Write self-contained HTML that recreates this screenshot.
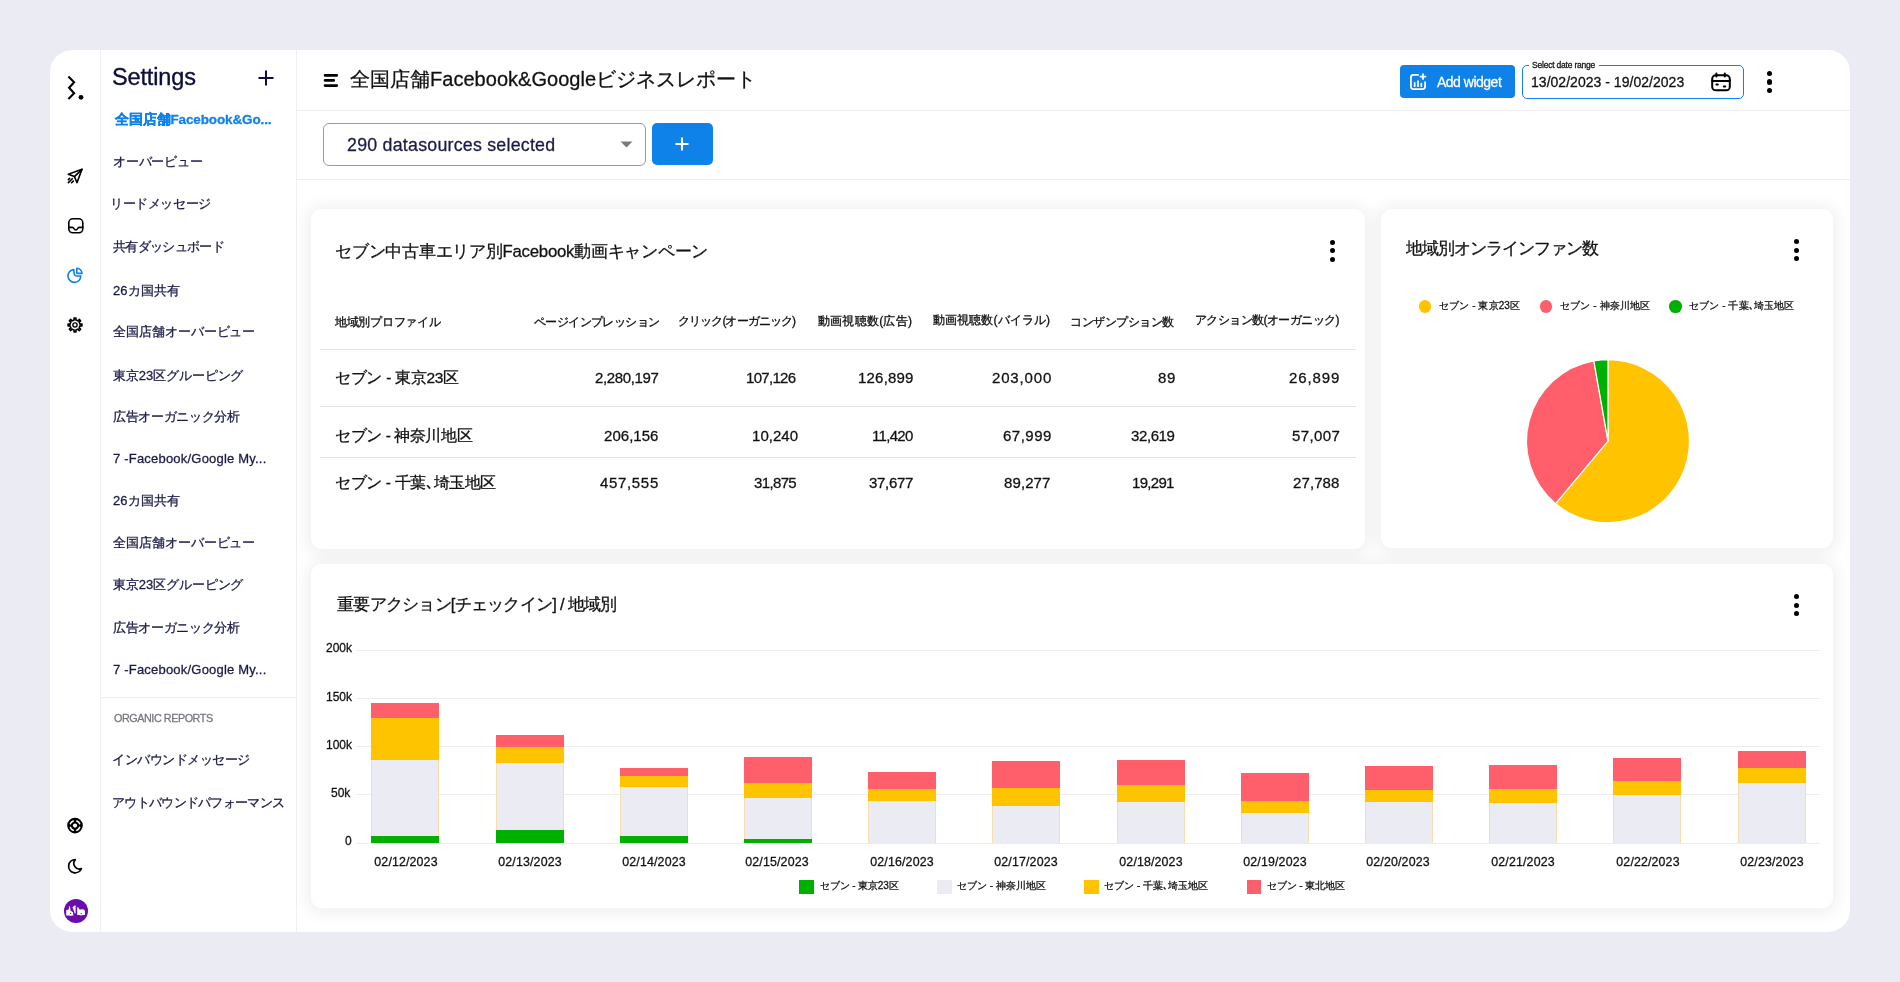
<!DOCTYPE html>
<html><head><meta charset="utf-8">
<style>
*{box-sizing:border-box;margin:0;padding:0}
html,body{width:1900px;height:982px;overflow:hidden;background:#EBEBF4;font-family:"Liberation Sans",sans-serif;color:#111;position:relative}
.t{position:absolute;white-space:nowrap;-webkit-text-stroke:0.28px currentColor;will-change:transform}
.r{position:absolute}
svg{position:absolute;overflow:visible}
.card{position:absolute;background:#fff;border-radius:11px;box-shadow:0 1px 15px 5px rgba(0,0,0,0.06)}
</style></head><body>

<div class="r" style="left:50px;top:50px;width:1800px;height:882px;background:#fff;border-radius:22px"></div>
<div class="r" style="left:100px;top:50px;width:1px;height:882px;background:#F0F0F6;"></div>
<div class="r" style="left:296px;top:50px;width:1px;height:882px;background:#EEEEF4;"></div>
<div class="r" style="left:297px;top:110px;width:1553px;height:1px;background:#EFEFF3;"></div>
<div class="r" style="left:297px;top:179px;width:1553px;height:1px;background:#EFEFF3;"></div>
<svg style="left:0;top:0" width="1" height="1">
<g fill="none" stroke="#000" stroke-width="2.1" stroke-linecap="butt" stroke-linejoin="miter"><polyline points="68.4,76.6 74.1,82.3 69.1,87.8 74.1,93.2 68.4,98.9"/></g><circle cx="81" cy="97.3" r="2.4" fill="#000"/>
<g fill="none" stroke="#000" stroke-width="1.6" stroke-linecap="round" stroke-linejoin="round"><path d="M82 169.3 L68.3 174.2 L74.4 176.6 L77 182.6 Z"/><path d="M82 169.3 L74.4 176.6"/><path d="M68.4 179.6 L69.6 178.4"/><path d="M68.4 182.6 L72.3 178.7"/><path d="M71.6 182.8 L73.3 181.1"/></g>
<g fill="none" stroke="#000" stroke-width="1.6" stroke-linecap="round" stroke-linejoin="round"><rect x="68.8" y="218.8" width="14" height="14" rx="4"/><path d="M68.8 227.4 H72.6 Q73.4 227.4 73.8 228.4 Q75.8 231.6 77.8 228.4 Q78.2 227.4 79 227.4 H82.8"/></g>
<g fill="none" stroke="#0E82E8" stroke-width="1.6" stroke-linecap="round" stroke-linejoin="round"><path d="M73.8 269.6 A6.4 6.4 0 1 0 80.8 276 H76.4 Q74.6 276 74.2 274.2 Z"/><path d="M76.8 268.3 A5.2 5.2 0 0 1 82 273.4 H76.8 Z"/></g>
<g fill="none" stroke="#000" stroke-width="1.6" stroke-linejoin="round"><path d="M73.50 320.23 L74.13 320.08 L74.03 318.07 L75.97 318.07 L75.87 320.08 L77.31 320.56 L77.87 320.90 L79.21 319.41 L80.59 320.79 L79.10 322.13 L79.77 323.50 L79.92 324.13 L81.93 324.03 L81.93 325.97 L79.92 325.87 L79.44 327.31 L79.10 327.87 L80.59 329.21 L79.21 330.59 L77.87 329.10 L76.50 329.77 L75.87 329.92 L75.97 331.93 L74.03 331.93 L74.13 329.92 L72.69 329.44 L72.13 329.10 L70.79 330.59 L69.41 329.21 L70.90 327.87 L70.23 326.50 L70.08 325.87 L68.07 325.97 L68.07 324.03 L70.08 324.13 L70.56 322.69 L70.90 322.13 L69.41 320.79 L70.79 319.41 L72.13 320.90 Z"/><circle cx="75" cy="325" r="2.1" stroke-width="1.4"/></g>
<circle cx="75" cy="825.6" r="7.8" fill="#000"/><circle cx="75" cy="825.6" r="2.1" fill="#fff"/><path d="M76.79 820.93 A5.0 5.0 0 0 1 79.67 823.81 M79.67 827.39 A5.0 5.0 0 0 1 76.79 830.27 M73.21 830.27 A5.0 5.0 0 0 1 70.33 827.39 M70.33 823.81 A5.0 5.0 0 0 1 73.21 820.93" fill="none" stroke="#fff" stroke-width="1.5" stroke-linecap="round"/>
<g fill="none" stroke="#000" stroke-width="1.7" stroke-linecap="round" stroke-linejoin="round"><path d="M75.3 859.6 A5.6 5.6 0 0 0 81.4 868.6 A6.6 6.6 0 1 1 75.3 859.6 Z"/></g>
</svg>
<div class="r" style="left:64px;top:898.7px;width:24px;height:24px;border-radius:50%;background:#6A0DAD"></div>
<svg style="left:0;top:0" width="1" height="1"><g fill="#fff"><path d="M66.2 910.2 L68.6 909.6 L69.3 906.2 L70 906.2 L70.6 911 L72.8 912 L73.5 915.5 L66.2 915.5 Z"/><circle cx="70.5" cy="913.4" r="2.2"/><path d="M72.5 907.3 L74.6 905.5 L75.6 905.5 L75.6 913.6 L74.8 913.6 Z"/><path d="M77.2 907.3 L78.2 907.3 L79.6 909.5 L83.2 909.2 L85 910.8 L85 915 L77.2 915 Z"/><circle cx="81.2" cy="913.3" r="2.2"/></g><g fill="#6A0DAD"><circle cx="70.5" cy="913.4" r="0.7"/><circle cx="81.2" cy="913.6" r="0.7"/><path d="M71.5 907.5 L73.8 911.5 L73 912 L70.9 908 Z"/></g></svg>
<div class="t" style="left:111.80px;top:62.10px;line-height:30px;font-size:23.5px;color:#0D0D3B;font-weight:normal;letter-spacing:-0.143px;-webkit-text-stroke:0.35px #0D0D3B">Settings</div>
<svg style="left:258px;top:70px" width="16" height="16"><path d="M8 0.5V15.5M0.5 8H15.5" stroke="#0D0D3B" stroke-width="2"/></svg>
<div class="t" style="left:114.70px;top:109.70px;line-height:20px;font-size:13.5px;color:#0E82E8;font-weight:bold;letter-spacing:-0.129px;">全国店舗Facebook&amp;Go...</div>
<div class="t" style="left:113.40px;top:152.20px;line-height:20px;font-size:13px;color:#1A1A48;font-weight:normal;letter-spacing:-0.217px;">オーバービュー</div>
<div class="t" style="left:110.40px;top:193.80px;line-height:20px;font-size:13px;color:#1A1A48;font-weight:normal;letter-spacing:-0.386px;">リードメッセージ</div>
<div class="t" style="left:113.40px;top:237.20px;line-height:20px;font-size:13px;color:#1A1A48;font-weight:normal;letter-spacing:-0.663px;">共有ダッシュボード</div>
<div class="t" style="left:113.40px;top:281.10px;line-height:20px;font-size:13px;color:#1A1A48;font-weight:normal;letter-spacing:0.100px;">26カ国共有</div>
<div class="t" style="left:113.40px;top:322.30px;line-height:20px;font-size:13px;color:#1A1A48;font-weight:normal;letter-spacing:-0.060px;">全国店舗オーバービュー</div>
<div class="t" style="left:113.40px;top:365.50px;line-height:20px;font-size:13px;color:#1A1A48;font-weight:normal;letter-spacing:-0.100px;">東京23区グルーピング</div>
<div class="t" style="left:113.40px;top:407.10px;line-height:20px;font-size:13px;color:#1A1A48;font-weight:normal;letter-spacing:-0.356px;">広告オーガニック分析</div>
<div class="t" style="left:113.40px;top:449.45px;line-height:20px;font-size:13px;color:#1A1A48;font-weight:normal;letter-spacing:0.204px;">7 -Facebook/Google My...</div>
<div class="t" style="left:113.40px;top:491.30px;line-height:20px;font-size:13px;color:#1A1A48;font-weight:normal;letter-spacing:0.100px;">26カ国共有</div>
<div class="t" style="left:113.40px;top:532.90px;line-height:20px;font-size:13px;color:#1A1A48;font-weight:normal;letter-spacing:-0.060px;">全国店舗オーバービュー</div>
<div class="t" style="left:113.40px;top:574.85px;line-height:20px;font-size:13px;color:#1A1A48;font-weight:normal;letter-spacing:-0.100px;">東京23区グルーピング</div>
<div class="t" style="left:113.40px;top:617.70px;line-height:20px;font-size:13px;color:#1A1A48;font-weight:normal;letter-spacing:-0.356px;">広告オーガニック分析</div>
<div class="t" style="left:113.40px;top:660.05px;line-height:20px;font-size:13px;color:#1A1A48;font-weight:normal;letter-spacing:0.204px;">7 -Facebook/Google My...</div>
<div class="t" style="left:112.40px;top:750.00px;line-height:20px;font-size:13px;color:#1A1A48;font-weight:normal;letter-spacing:-0.460px;">インバウンドメッセージ</div>
<div class="t" style="left:112.40px;top:793.20px;line-height:20px;font-size:13px;color:#1A1A48;font-weight:normal;letter-spacing:-0.692px;">アウトバウンドパフォーマンス</div>
<div class="r" style="left:101px;top:697px;width:195px;height:1px;background:#EEEEF3;"></div>
<div class="t" style="left:113.70px;top:707.95px;line-height:20px;font-size:10.8px;color:#77777F;font-weight:normal;letter-spacing:-0.450px;">ORGANIC REPORTS</div>
<svg style="left:0;top:0" width="1" height="1"><path d="M325.1 75.4H336.7M325.1 80.45H333.7M325.1 85.6H336.7" stroke="#000" stroke-width="2.8" stroke-linecap="round"/></svg>
<div class="t" style="left:350.10px;top:63.60px;line-height:30px;font-size:20px;color:#111;font-weight:normal;letter-spacing:0.019px;">全国店舗Facebook&amp;Googleビジネスレポート</div>
<div class="r" style="left:1399.7px;top:65.2px;width:115.2px;height:32.8px;background:#0E82E8;border-radius:4px"></div>
<svg style="left:1408px;top:72px" width="20" height="20" viewBox="0 0 24 24"><g fill="none" stroke="#fff" stroke-width="2.1" stroke-linecap="round" stroke-linejoin="round"><path d="M12 3.5H6.5a3 3 0 0 0-3 3v11a3 3 0 0 0 3 3h11a3 3 0 0 0 3-3v-5.5"/><path d="M8 17v-4M12 17v-6M16 17v-3"/><path d="M18 2.5v6M15 5.5h6"/></g></svg>
<div class="t" style="left:1437.00px;top:71.50px;line-height:20px;font-size:14px;color:#fff;font-weight:normal;letter-spacing:-0.500px;">Add widget</div>
<div class="r" style="left:1521.8px;top:65.2px;width:222.4px;height:33.6px;background:transparent;border:1.3px solid #0E82E8;border-radius:5px"></div>
<div class="r" style="left:1529px;top:60px;width:70px;height:8px;background:#fff;"></div>
<div class="t" style="left:1532.30px;top:60.00px;line-height:10px;font-size:8.5px;color:#111;font-weight:normal;letter-spacing:-0.206px;">Select date range</div>
<div class="t" style="left:1530.60px;top:72.00px;line-height:20px;font-size:14px;color:#111;font-weight:normal;letter-spacing:0.027px;">13/02/2023 - 19/02/2023</div>
<svg style="left:0;top:0" width="1" height="1"><g fill="none" stroke="#000" stroke-width="2" stroke-linecap="round" stroke-linejoin="round"><rect x="1712.2" y="75.3" width="17.6" height="15" rx="3.6"/><path d="M1716.4 73.4v3.2M1724.8 73.4v3.2M1712.2 81h17.6"/><path d="M1716.4 84.6h1.4M1723.8 86.4h1.4"/></g></svg>
<div class="r" style="left:1766.7px;top:71.2px;width:5.2px;height:5.2px;border-radius:50%;background:#000"></div>
<div class="r" style="left:1766.7px;top:79.4px;width:5.2px;height:5.2px;border-radius:50%;background:#000"></div>
<div class="r" style="left:1766.7px;top:87.60000000000001px;width:5.2px;height:5.2px;border-radius:50%;background:#000"></div>
<div class="r" style="left:323px;top:123px;width:323px;height:42.5px;background:#fff;border:1px solid #9A9AA4;border-radius:6px"></div>
<div class="t" style="left:346.90px;top:132.50px;line-height:24px;font-size:17.8px;color:#1A1A48;font-weight:normal;letter-spacing:0.239px;">290 datasources selected</div>
<svg style="left:620px;top:141px" width="13" height="7"><path d="M0.5 0.5H12.5L6.5 6.5Z" fill="#7B7B7F"/></svg>
<div class="r" style="left:652px;top:123px;width:60.5px;height:42px;background:#0E82E8;border-radius:5px"></div>
<svg style="left:675px;top:137px" width="14" height="14"><path d="M7 0.5V13.5M0.5 7H13.5" stroke="#fff" stroke-width="2.1"/></svg>
<div class="card" style="left:311px;top:208.5px;width:1054px;height:340px"></div>
<div class="t" style="left:334.70px;top:239.55px;line-height:24px;font-size:16.8px;color:#111;font-weight:normal;letter-spacing:-0.248px;">セブン中古車エリア別Facebook動画キャンペーン</div>
<div class="r" style="left:1329.5px;top:239.5px;width:5.0px;height:5.0px;border-radius:50%;background:#000"></div>
<div class="r" style="left:1329.5px;top:248.0px;width:5.0px;height:5.0px;border-radius:50%;background:#000"></div>
<div class="r" style="left:1329.5px;top:256.5px;width:5.0px;height:5.0px;border-radius:50%;background:#000"></div>
<div class="t" style="left:334.70px;top:311.60px;line-height:20px;font-size:12px;color:#111;font-weight:normal;letter-spacing:-0.288px;-webkit-text-stroke:0.32px #111">地域別プロファイル</div>
<div class="t" style="right:1241.00px;text-align:right;top:311.85px;line-height:20px;font-size:12px;color:#111;font-weight:normal;letter-spacing:-0.600px;-webkit-text-stroke:0.32px #111">ページインプレッション</div>
<div class="t" style="right:1104.40px;text-align:right;top:310.85px;line-height:20px;font-size:12px;color:#111;font-weight:normal;letter-spacing:-0.900px;-webkit-text-stroke:0.32px #111">クリック(オーガニック)</div>
<div class="t" style="right:987.96px;text-align:right;top:311.35px;line-height:20px;font-size:12px;color:#111;font-weight:normal;letter-spacing:0.237px;-webkit-text-stroke:0.32px #111">動画視聴数(広告)</div>
<div class="t" style="right:849.81px;text-align:right;top:310.35px;line-height:20px;font-size:12px;color:#111;font-weight:normal;letter-spacing:0.090px;-webkit-text-stroke:0.32px #111">動画視聴数(バイラル)</div>
<div class="t" style="right:725.96px;text-align:right;top:311.85px;line-height:20px;font-size:12px;color:#111;font-weight:normal;letter-spacing:-0.463px;-webkit-text-stroke:0.32px #111">コンザンプション数</div>
<div class="t" style="right:561.27px;text-align:right;top:310.35px;line-height:20px;font-size:12px;color:#111;font-weight:normal;letter-spacing:-0.569px;-webkit-text-stroke:0.32px #111">アクション数(オーガニック)</div>
<div class="r" style="left:320px;top:349px;width:1036px;height:1px;background:#E4E4E7;"></div>
<div class="r" style="left:320px;top:406px;width:1036px;height:1px;background:#E4E4E7;"></div>
<div class="r" style="left:320px;top:457px;width:1036px;height:1px;background:#E4E4E7;"></div>
<div class="t" style="left:335.10px;top:368.00px;line-height:20px;font-size:15.5px;color:#111;font-weight:normal;letter-spacing:-0.280px;">セブン - 東京23区</div>
<div class="t" style="right:1241.77px;text-align:right;top:368.00px;line-height:20px;font-size:15px;color:#111;font-weight:normal;letter-spacing:-0.375px;">2,280,197</div>
<div class="t" style="right:1104.20px;text-align:right;top:368.00px;line-height:20px;font-size:15px;color:#111;font-weight:normal;letter-spacing:-0.700px;">107,126</div>
<div class="t" style="right:986.60px;text-align:right;top:368.00px;line-height:20px;font-size:15px;color:#111;font-weight:normal;letter-spacing:0.200px;">126,899</div>
<div class="t" style="right:847.97px;text-align:right;top:368.00px;line-height:20px;font-size:15px;color:#111;font-weight:normal;letter-spacing:0.833px;">203,000</div>
<div class="t" style="right:724.40px;text-align:right;top:368.00px;line-height:20px;font-size:15px;color:#111;font-weight:normal;letter-spacing:0.600px;">89</div>
<div class="t" style="right:559.60px;text-align:right;top:368.00px;line-height:20px;font-size:15px;color:#111;font-weight:normal;letter-spacing:0.900px;">26,899</div>
<div class="t" style="left:335.10px;top:426.30px;line-height:20px;font-size:15.5px;color:#111;font-weight:normal;letter-spacing:-0.420px;">セブン - 神奈川地区</div>
<div class="t" style="right:1241.37px;text-align:right;top:426.30px;line-height:20px;font-size:15px;color:#111;font-weight:normal;letter-spacing:0.033px;">206,156</div>
<div class="t" style="right:1102.16px;text-align:right;top:426.30px;line-height:20px;font-size:15px;color:#111;font-weight:normal;letter-spacing:0.040px;">10,240</div>
<div class="t" style="right:987.48px;text-align:right;top:426.30px;line-height:20px;font-size:15px;color:#111;font-weight:normal;letter-spacing:-0.680px;">11,420</div>
<div class="t" style="right:848.30px;text-align:right;top:426.30px;line-height:20px;font-size:15px;color:#111;font-weight:normal;letter-spacing:0.500px;">67,999</div>
<div class="t" style="right:725.20px;text-align:right;top:426.30px;line-height:20px;font-size:15px;color:#111;font-weight:normal;letter-spacing:-0.400px;">32,619</div>
<div class="t" style="right:560.10px;text-align:right;top:426.30px;line-height:20px;font-size:15px;color:#111;font-weight:normal;letter-spacing:0.400px;">57,007</div>
<div class="t" style="left:335.10px;top:473.30px;line-height:20px;font-size:15.5px;color:#111;font-weight:normal;letter-spacing:-0.358px;">セブン - 千葉､埼玉地区</div>
<div class="t" style="right:1240.63px;text-align:right;top:473.30px;line-height:20px;font-size:15px;color:#111;font-weight:normal;letter-spacing:0.667px;">457,555</div>
<div class="t" style="right:1103.84px;text-align:right;top:473.30px;line-height:20px;font-size:15px;color:#111;font-weight:normal;letter-spacing:-0.640px;">31,875</div>
<div class="t" style="right:987.10px;text-align:right;top:473.30px;line-height:20px;font-size:15px;color:#111;font-weight:normal;letter-spacing:-0.300px;">37,677</div>
<div class="t" style="right:849.70px;text-align:right;top:473.30px;line-height:20px;font-size:15px;color:#111;font-weight:normal;letter-spacing:0.100px;">89,277</div>
<div class="t" style="right:725.88px;text-align:right;top:473.30px;line-height:20px;font-size:15px;color:#111;font-weight:normal;letter-spacing:-0.700px;">19,291</div>
<div class="t" style="right:560.40px;text-align:right;top:473.30px;line-height:20px;font-size:15px;color:#111;font-weight:normal;letter-spacing:0.100px;">27,788</div>
<div class="card" style="left:1381px;top:208.5px;width:452px;height:339px"></div>
<div class="t" style="left:1405.80px;top:235.80px;line-height:24px;font-size:16.5px;color:#111;font-weight:normal;letter-spacing:-0.964px;">地域別オンラインファン数</div>
<div class="r" style="left:1794.0px;top:239.2px;width:5.0px;height:5.0px;border-radius:50%;background:#000"></div>
<div class="r" style="left:1794.0px;top:247.7px;width:5.0px;height:5.0px;border-radius:50%;background:#000"></div>
<div class="r" style="left:1794.0px;top:256.2px;width:5.0px;height:5.0px;border-radius:50%;background:#000"></div>
<div class="r" style="left:1418.9px;top:300.4px;width:12.6px;height:12.6px;border-radius:50%;background:#FFC300"></div>
<div class="t" style="left:1439.00px;top:298.25px;line-height:16px;font-size:10px;color:#111;font-weight:normal;letter-spacing:0.100px;">セブン - 東京23区</div>
<div class="r" style="left:1539.8px;top:300.4px;width:12.6px;height:12.6px;border-radius:50%;background:#FF5E6A"></div>
<div class="t" style="left:1559.80px;top:298.25px;line-height:16px;font-size:10px;color:#111;font-weight:normal;letter-spacing:0.110px;">セブン - 神奈川地区</div>
<div class="r" style="left:1669.2px;top:300.4px;width:12.6px;height:12.6px;border-radius:50%;background:#00B000"></div>
<div class="t" style="left:1689.20px;top:298.25px;line-height:16px;font-size:10px;color:#111;font-weight:normal;letter-spacing:0.100px;">セブン - 千葉､埼玉地区</div>
<svg style="left:0;top:0" width="1" height="1"><path d="M1608,441.2 L1608.00,359.70 A81.5,81.5 0 1 1 1555.61,503.63 Z" fill="#FFC300" stroke="#fff" stroke-width="1.2" stroke-linejoin="round"/><path d="M1608,441.2 L1555.61,503.63 A81.5,81.5 0 0 1 1593.85,360.94 Z" fill="#FF5E6A" stroke="#fff" stroke-width="1.2" stroke-linejoin="round"/><path d="M1608,441.2 L1593.85,360.94 A81.5,81.5 0 0 1 1608.00,359.70 Z" fill="#00B000" stroke="#fff" stroke-width="1.2" stroke-linejoin="round"/></svg>
<div class="card" style="left:311px;top:563.5px;width:1522px;height:344.5px"></div>
<div class="t" style="left:336.70px;top:592.20px;line-height:24px;font-size:16.5px;color:#111;font-weight:normal;letter-spacing:-0.735px;">重要アクション[チェックイン] / 地域別</div>
<div class="r" style="left:1794.0px;top:594.1px;width:5.0px;height:5.0px;border-radius:50%;background:#000"></div>
<div class="r" style="left:1794.0px;top:602.6px;width:5.0px;height:5.0px;border-radius:50%;background:#000"></div>
<div class="r" style="left:1794.0px;top:611.1px;width:5.0px;height:5.0px;border-radius:50%;background:#000"></div>
<div class="r" style="left:356px;top:650px;width:1464px;height:1px;background:#ECECF0;"></div>
<div class="t" style="right:1548.40px;text-align:right;top:640.30px;line-height:16px;font-size:12px;color:#111;font-weight:normal;">200k</div>
<div class="r" style="left:356px;top:698px;width:1464px;height:1px;background:#ECECF0;"></div>
<div class="t" style="right:1548.40px;text-align:right;top:688.53px;line-height:16px;font-size:12px;color:#111;font-weight:normal;">150k</div>
<div class="r" style="left:356px;top:746px;width:1464px;height:1px;background:#ECECF0;"></div>
<div class="t" style="right:1548.40px;text-align:right;top:736.76px;line-height:16px;font-size:12px;color:#111;font-weight:normal;">100k</div>
<div class="r" style="left:356px;top:794px;width:1464px;height:1px;background:#ECECF0;"></div>
<div class="t" style="right:1549.40px;text-align:right;top:784.99px;line-height:16px;font-size:12px;color:#111;font-weight:normal;">50k</div>
<div class="r" style="left:356px;top:843px;width:1464px;height:1px;background:#ECECF0;"></div>
<div class="t" style="right:1548.40px;text-align:right;top:833.22px;line-height:16px;font-size:12px;color:#111;font-weight:normal;">0</div>
<div class="r" style="left:371.3px;top:703.0px;width:68px;height:140.2px;background:#FF5F6B"></div>
<div class="r" style="left:371.3px;top:717.6px;width:68px;height:125.6px;background:#FFC400"></div>
<div class="r" style="left:371.3px;top:759.8px;width:68px;height:83.4px;background:#EBEBF4;box-shadow:inset 1px 0 0 #F7DDB0,inset -1px 0 0 #F7DDB0"></div>
<div class="r" style="left:371.3px;top:835.7px;width:68px;height:7.5px;background:#00B000"></div>
<div class="t" style="left:355.77px;width:100px;text-align:center;top:854.40px;line-height:16px;font-size:12.4px;color:#111;font-weight:normal;letter-spacing:0.133px;">02/12/2023</div>
<div class="r" style="left:495.5px;top:735.2px;width:68px;height:108.0px;background:#FF5F6B"></div>
<div class="r" style="left:495.5px;top:747.0px;width:68px;height:96.2px;background:#FFC400"></div>
<div class="r" style="left:495.5px;top:763.4px;width:68px;height:79.8px;background:#EBEBF4;box-shadow:inset 1px 0 0 #F7DDB0,inset -1px 0 0 #F7DDB0"></div>
<div class="r" style="left:495.5px;top:830.2px;width:68px;height:13.0px;background:#00B000"></div>
<div class="t" style="left:479.68px;width:100px;text-align:center;top:853.70px;line-height:16px;font-size:12.4px;color:#111;font-weight:normal;letter-spacing:0.156px;">02/13/2023</div>
<div class="r" style="left:619.7px;top:768.2px;width:68px;height:75.0px;background:#FF5F6B"></div>
<div class="r" style="left:619.7px;top:775.5px;width:68px;height:67.7px;background:#FFC400"></div>
<div class="r" style="left:619.7px;top:787.3px;width:68px;height:55.9px;background:#EBEBF4;box-shadow:inset 1px 0 0 #F7DDB0,inset -1px 0 0 #F7DDB0"></div>
<div class="r" style="left:619.7px;top:835.7px;width:68px;height:7.5px;background:#00B000"></div>
<div class="t" style="left:604.08px;width:100px;text-align:center;top:853.70px;line-height:16px;font-size:12.4px;color:#111;font-weight:normal;letter-spacing:0.156px;">02/14/2023</div>
<div class="r" style="left:743.9px;top:757.2px;width:68px;height:86.0px;background:#FF5F6B"></div>
<div class="r" style="left:743.9px;top:782.5px;width:68px;height:60.7px;background:#FFC400"></div>
<div class="r" style="left:743.9px;top:798.3px;width:68px;height:44.9px;background:#EBEBF4;box-shadow:inset 1px 0 0 #F7DDB0,inset -1px 0 0 #F7DDB0"></div>
<div class="r" style="left:743.9px;top:839.3px;width:68px;height:3.9px;background:#00B000"></div>
<div class="t" style="left:727.48px;width:100px;text-align:center;top:853.70px;line-height:16px;font-size:12.4px;color:#111;font-weight:normal;letter-spacing:0.156px;">02/15/2023</div>
<div class="r" style="left:868.1px;top:771.9px;width:68px;height:71.3px;background:#FF5F6B"></div>
<div class="r" style="left:868.1px;top:788.9px;width:68px;height:54.3px;background:#FFC400"></div>
<div class="r" style="left:868.1px;top:800.9px;width:68px;height:42.3px;background:#EBEBF4;box-shadow:inset 1px 0 0 #F7DDB0,inset -1px 0 0 #F7DDB0"></div>
<div class="t" style="left:851.88px;width:100px;text-align:center;top:853.70px;line-height:16px;font-size:12.4px;color:#111;font-weight:normal;letter-spacing:0.156px;">02/16/2023</div>
<div class="r" style="left:992.3px;top:760.9px;width:68px;height:82.3px;background:#FF5F6B"></div>
<div class="r" style="left:992.3px;top:788.4px;width:68px;height:54.8px;background:#FFC400"></div>
<div class="r" style="left:992.3px;top:805.6px;width:68px;height:37.6px;background:#EBEBF4;box-shadow:inset 1px 0 0 #F7DDB0,inset -1px 0 0 #F7DDB0"></div>
<div class="t" style="left:976.28px;width:100px;text-align:center;top:853.70px;line-height:16px;font-size:12.4px;color:#111;font-weight:normal;letter-spacing:0.156px;">02/17/2023</div>
<div class="r" style="left:1116.5px;top:759.8px;width:68px;height:83.4px;background:#FF5F6B"></div>
<div class="r" style="left:1116.5px;top:785.0px;width:68px;height:58.2px;background:#FFC400"></div>
<div class="r" style="left:1116.5px;top:801.9px;width:68px;height:41.3px;background:#EBEBF4;box-shadow:inset 1px 0 0 #F7DDB0,inset -1px 0 0 #F7DDB0"></div>
<div class="t" style="left:1100.57px;width:100px;text-align:center;top:854.40px;line-height:16px;font-size:12.4px;color:#111;font-weight:normal;letter-spacing:0.133px;">02/18/2023</div>
<div class="r" style="left:1240.7px;top:772.6px;width:68px;height:70.6px;background:#FF5F6B"></div>
<div class="r" style="left:1240.7px;top:800.8px;width:68px;height:42.4px;background:#FFC400"></div>
<div class="r" style="left:1240.7px;top:813.0px;width:68px;height:30.2px;background:#EBEBF4;box-shadow:inset 1px 0 0 #F7DDB0,inset -1px 0 0 #F7DDB0"></div>
<div class="t" style="left:1225.08px;width:100px;text-align:center;top:853.70px;line-height:16px;font-size:12.4px;color:#111;font-weight:normal;letter-spacing:0.156px;">02/19/2023</div>
<div class="r" style="left:1364.9px;top:766.0px;width:68px;height:77.2px;background:#FF5F6B"></div>
<div class="r" style="left:1364.9px;top:789.8px;width:68px;height:53.4px;background:#FFC400"></div>
<div class="r" style="left:1364.9px;top:801.9px;width:68px;height:41.3px;background:#EBEBF4;box-shadow:inset 1px 0 0 #F7DDB0,inset -1px 0 0 #F7DDB0"></div>
<div class="t" style="left:1348.48px;width:100px;text-align:center;top:853.70px;line-height:16px;font-size:12.4px;color:#111;font-weight:normal;letter-spacing:0.156px;">02/20/2023</div>
<div class="r" style="left:1489.1px;top:765.3px;width:68px;height:77.9px;background:#FF5F6B"></div>
<div class="r" style="left:1489.1px;top:788.5px;width:68px;height:54.7px;background:#FFC400"></div>
<div class="r" style="left:1489.1px;top:803.1px;width:68px;height:40.1px;background:#EBEBF4;box-shadow:inset 1px 0 0 #F7DDB0,inset -1px 0 0 #F7DDB0"></div>
<div class="t" style="left:1472.88px;width:100px;text-align:center;top:853.70px;line-height:16px;font-size:12.4px;color:#111;font-weight:normal;letter-spacing:0.156px;">02/21/2023</div>
<div class="r" style="left:1613.3px;top:758.0px;width:68px;height:85.2px;background:#FF5F6B"></div>
<div class="r" style="left:1613.3px;top:781.2px;width:68px;height:62.0px;background:#FFC400"></div>
<div class="r" style="left:1613.3px;top:794.5px;width:68px;height:48.7px;background:#EBEBF4;box-shadow:inset 1px 0 0 #F7DDB0,inset -1px 0 0 #F7DDB0"></div>
<div class="t" style="left:1597.77px;width:100px;text-align:center;top:854.40px;line-height:16px;font-size:12.4px;color:#111;font-weight:normal;letter-spacing:0.133px;">02/22/2023</div>
<div class="r" style="left:1737.5px;top:750.7px;width:68px;height:92.5px;background:#FF5F6B"></div>
<div class="r" style="left:1737.5px;top:767.9px;width:68px;height:75.3px;background:#FFC400"></div>
<div class="r" style="left:1737.5px;top:782.5px;width:68px;height:60.7px;background:#EBEBF4;box-shadow:inset 1px 0 0 #F7DDB0,inset -1px 0 0 #F7DDB0"></div>
<div class="t" style="left:1721.68px;width:100px;text-align:center;top:853.70px;line-height:16px;font-size:12.4px;color:#111;font-weight:normal;letter-spacing:0.156px;">02/23/2023</div>
<div class="r" style="left:799px;top:879.5px;width:14.6px;height:14.1px;background:#00B000;"></div>
<div class="t" style="left:820.00px;top:878.10px;line-height:16px;font-size:10px;color:#111;font-weight:normal;letter-spacing:-0.140px;">セブン - 東京23区</div>
<div class="r" style="left:937px;top:879.5px;width:14.6px;height:14.1px;background:#EBEBF4;"></div>
<div class="t" style="left:957.20px;top:878.10px;line-height:16px;font-size:10px;color:#111;font-weight:normal;letter-spacing:-0.020px;">セブン - 神奈川地区</div>
<div class="r" style="left:1084px;top:879.5px;width:14.6px;height:14.1px;background:#FFC400;"></div>
<div class="t" style="left:1104.20px;top:878.10px;line-height:16px;font-size:10px;color:#111;font-weight:normal;letter-spacing:0.033px;">セブン - 千葉､埼玉地区</div>
<div class="r" style="left:1246.6px;top:879.5px;width:14.6px;height:14.1px;background:#FF5F6B;"></div>
<div class="t" style="left:1267.00px;top:878.10px;line-height:16px;font-size:10px;color:#111;font-weight:normal;letter-spacing:-0.111px;">セブン - 東北地区</div>
</body></html>
